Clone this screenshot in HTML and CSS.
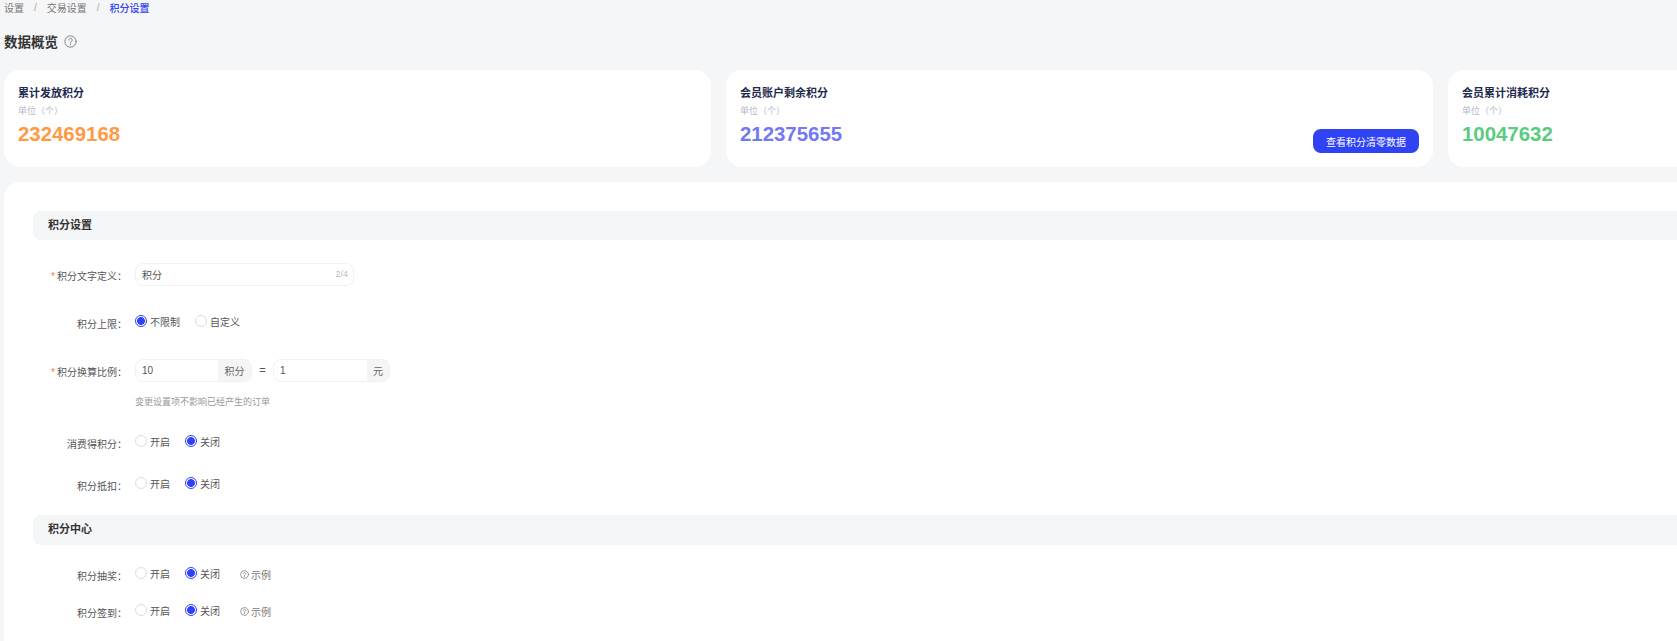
FILE: index.html
```html
<!DOCTYPE html>
<html lang="zh-CN">
<head>
  <meta charset="UTF-8">
  <title>积分设置</title>
  <link rel="stylesheet" href="styles.css">
</head>
<body>
  <div class="crumbs">
    <span>设置</span><i>/</i><span>交易设置</span><i>/</i><b>积分设置</b>
  </div>

  <div class="page-title">
    <h1>数据概览</h1>
    <svg class="help help-big" viewBox="0 0 16 16"><circle cx="8" cy="8" r="7"/><path d="M5.9 6.2a2.1 2.1 0 1 1 3.2 1.8c-.7.4-1.1.8-1.1 1.6"/><path d="M8 11.2v.9"/></svg>
  </div>

  <div class="stats">
    <div class="stat-card">
      <div class="stat-name">累计发放积分</div>
      <div class="stat-unit">单位（个）</div>
      <div class="stat-num orange">232469168</div>
    </div>
    <div class="stat-card">
      <div class="stat-name">会员账户剩余积分</div>
      <div class="stat-unit">单位（个）</div>
      <div class="stat-num purple">212375655</div>
      <button class="btn-clear">查看积分清零数据</button>
    </div>
    <div class="stat-card">
      <div class="stat-name">会员累计消耗积分</div>
      <div class="stat-unit">单位（个）</div>
      <div class="stat-num green">10047632</div>
    </div>
  </div>

  <div class="panel">
    <div class="section-head">积分设置</div>

    <div class="row row-wide">
      <label class="field-label"><em>*</em>积分文字定义：</label>
      <div class="input-box input-long"><span>积分</span><small>2/4</small></div>
    </div>

    <div class="row row-wide">
      <label class="field-label">积分上限：</label>
      <div class="radios radios-limit">
        <span class="radio on">不限制</span>
        <span class="radio">自定义</span>
      </div>
    </div>

    <div class="row">
      <label class="field-label"><em>*</em>积分换算比例：</label>
      <div class="input-box input-rate"><span>10</span><b class="addon">积分</b></div>
      <span class="equals">=</span>
      <div class="input-box input-rate"><span>1</span><b class="addon addon-small">元</b></div>
    </div>
    <p class="hint">变更设置项不影响已经产生的订单</p>

    <div class="row">
      <label class="field-label">消费得积分：</label>
      <div class="radios">
        <span class="radio">开启</span>
        <span class="radio on">关闭</span>
      </div>
    </div>

    <div class="row">
      <label class="field-label">积分抵扣：</label>
      <div class="radios">
        <span class="radio">开启</span>
        <span class="radio on">关闭</span>
      </div>
    </div>

    <div class="section-head section-center">积分中心</div>

    <div class="row row-tight">
      <label class="field-label">积分抽奖：</label>
      <div class="radios">
        <span class="radio">开启</span>
        <span class="radio on">关闭</span>
      </div>
      <span class="example">
        <svg class="help" viewBox="0 0 16 16"><circle cx="8" cy="8" r="7"/><path d="M5.9 6.2a2.1 2.1 0 1 1 3.2 1.8c-.7.4-1.1.8-1.1 1.6"/><path d="M8 11.2v.9"/></svg>示例
      </span>
    </div>

    <div class="row">
      <label class="field-label">积分签到：</label>
      <div class="radios">
        <span class="radio">开启</span>
        <span class="radio on">关闭</span>
      </div>
      <span class="example">
        <svg class="help" viewBox="0 0 16 16"><circle cx="8" cy="8" r="7"/><path d="M5.9 6.2a2.1 2.1 0 1 1 3.2 1.8c-.7.4-1.1.8-1.1 1.6"/><path d="M8 11.2v.9"/></svg>示例
      </span>
    </div>
  </div>
</body>
</html>
```

FILE: styles.css
```css
html, body {
  height: 100%;
  overflow: hidden;
}
body {
  margin: 0;
  padding-left: 4px;
  background: #f5f6f8;
  font-family: "Liberation Sans", "Noto Sans CJK SC", sans-serif;
  font-size: 10px;
  color: #555;
}
.crumbs {
  display: flex;
  align-items: center;
  height: 14px;
  color: #777;
  font-size: 10px;
}
.crumbs i {
  margin: 0 10px;
  font-style: normal;
  color: #aaa;
}
.crumbs b {
  color: #2f43f5;
  font-weight: 500;
}
.page-title {
  display: flex;
  align-items: center;
  gap: 6px;
  height: 20px;
  margin-top: 17px;
}
h1 {
  margin: 0;
  font-size: 13.5px;
  font-weight: 700;
  color: #333;
}
.help {
  width: 9px;
  height: 9px;
  fill: none;
  stroke: #777;
  stroke-width: 1.3;
  stroke-linecap: round;
}
.help-big {
  width: 13px;
  height: 13px;
  stroke-width: 1.1;
}
.stats {
  display: flex;
  gap: 15px;
  margin-top: 19px;
}
.stat-card {
  position: relative;
  flex: 0 0 707px;
  box-sizing: border-box;
  height: 97px;
  padding: 15px 14px;
  background: #fff;
  border-radius: 16px;
}
.stat-name {
  font-size: 11px;
  line-height: 16px;
  font-weight: 700;
  color: #1d2a4d;
}
.stat-unit {
  margin-top: 4px;
  font-size: 9px;
  line-height: 12px;
  color: #b6bacb;
}
.stat-num {
  margin-top: 5px;
  font-size: 20.4px;
  line-height: 24px;
  font-weight: 700;
}
.orange { color: #ff9a43; }
.purple { color: #7279f2; }
.green { color: #5acb7f; }
.btn-clear {
  position: absolute;
  right: 14px;
  bottom: 14px;
  width: 106px;
  height: 24px;
  padding: 0;
  border: none;
  border-radius: 8px;
  background: #2f43f5;
  color: #fff;
  font: inherit;
  font-size: 10px;
}
.panel {
  width: 1800px;
  height: 600px;
  box-sizing: border-box;
  margin-top: 15px;
  padding: 29px 0 0 29px;
  background: #fff;
  border-radius: 16px;
}
.section-head {
  box-sizing: border-box;
  height: 29px;
  margin-bottom: 23px;
  padding-left: 15px;
  background: #f5f6f8;
  border-radius: 8px;
  font-size: 11px;
  line-height: 28px;
  font-weight: 700;
  color: #333;
}
.section-center {
  height: 30px;
  margin-bottom: 18px;
}
.row {
  display: flex;
  align-items: center;
  height: 22px;
  margin-bottom: 20px;
}
.row-wide {
  margin-bottom: 26px;
}
.row-tight {
  margin-bottom: 15px;
}
.field-label {
  width: 94px;
  margin-right: 8px;
  padding-top: 2px;
  text-align: right;
  white-space: nowrap;
}
.field-label em {
  margin-right: 2px;
  font-style: normal;
  color: #f5735a;
}
.input-box {
  display: flex;
  align-items: center;
  justify-content: space-between;
  box-sizing: border-box;
  height: 23px;
  padding-left: 6px;
  border: 1px solid #f1f1f3;
  border-radius: 8px;
  overflow: hidden;
}
.input-long {
  width: 219px;
  padding-right: 5px;
}
.input-long small {
  font-size: 9px;
  color: #bbb;
}
.input-rate {
  width: 117px;
}
.input-rate + .equals + .input-rate {
  width: 117px;
}
.addon {
  display: flex;
  align-items: center;
  justify-content: center;
  flex: 0 0 33px;
  height: 100%;
  background: #f5f5f5;
  font-weight: 400;
  color: #666;
}
.addon-small {
  flex-basis: 22px;
}
.equals {
  width: 21px;
  text-align: center;
  font-size: 11px;
}
.hint {
  height: 14px;
  margin: -6px 0 22px 102px;
  font-size: 9px;
  line-height: 14px;
  color: #999;
}
.radios {
  display: flex;
  gap: 15px;
  width: 105px;
  margin-top: -2px;
}
.radios-limit {
  width: auto;
}
.radio {
  display: flex;
  align-items: center;
  gap: 3px;
}
.radio::before {
  content: "";
  box-sizing: border-box;
  width: 12px;
  height: 12px;
  border: 1px solid #dcdde2;
  border-radius: 50%;
  background: #fff;
}
.radio.on::before {
  border-color: #2f43f5;
  background: radial-gradient(circle, #2f43f5 0 3.6px, #fff 4.2px);
}
.example {
  display: flex;
  align-items: center;
  gap: 2px;
  color: #777;
}
```
